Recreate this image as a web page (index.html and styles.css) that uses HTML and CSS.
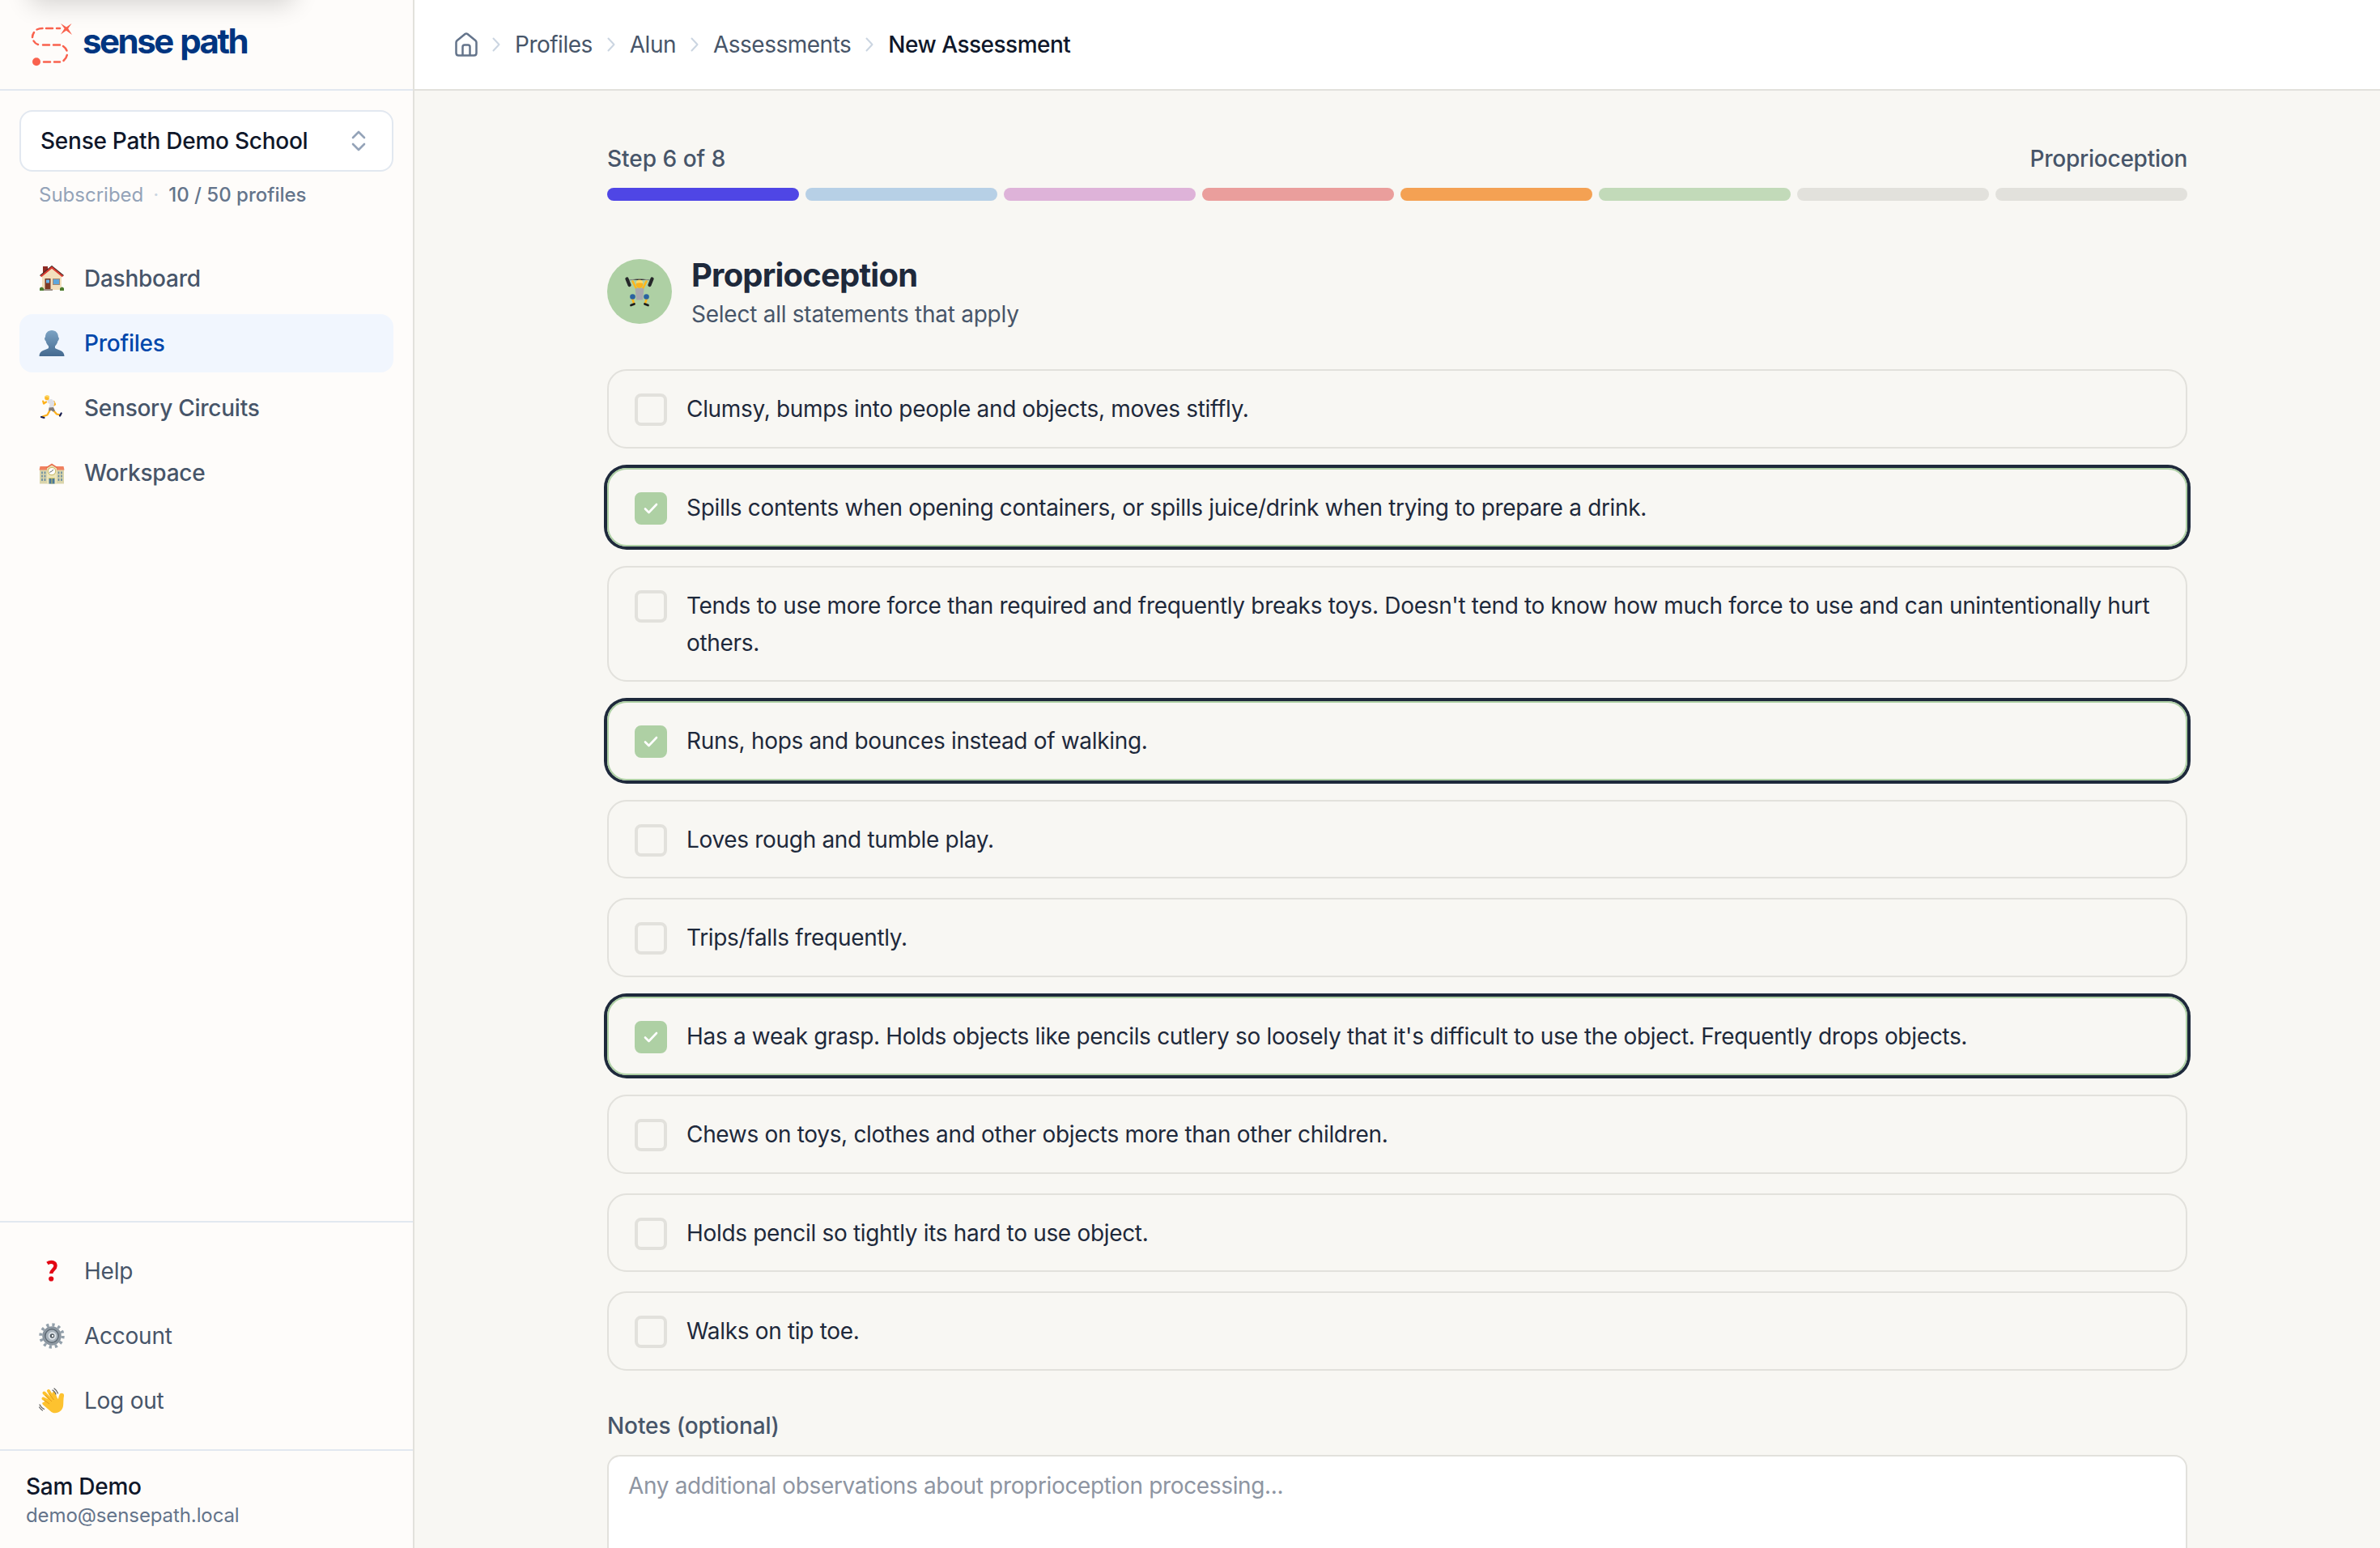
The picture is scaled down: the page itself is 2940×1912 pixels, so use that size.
FILE: index.html
```html
<!DOCTYPE html>
<html lang="en">
<head>
    <meta charset="UTF-8">
    <meta name="viewport" content="width=device-width, initial-scale=1.0">
    <title>New Assessment - Sense Path</title>
    <link rel="stylesheet" href="styles.css">
</head>
<body>
    <aside class="sidebar">
        <div class="skip-link"></div>
        <div class="brand">
            <svg class="brand-mark" viewBox="36 26 56 58">
                <g fill="none" stroke="#f9624e" stroke-width="2.5" stroke-linecap="round">
                    <path d="M74 35h-4M65 35h-8M52.500 35q-4 0-7 1.500M42 40q-2 3-2 6M41.500 50.500q2 3.500 5.500 4.500M53 55.500h8M66 55.500h8M78 57q3 2 4.500 5.500M82.800 68q-.8 4-4.300 7M74 76.500h-7M62 76.500h-8"/>
                </g>
                <path fill="#f9624e" d="M75 29l7 4.600L88.500 29l-4.300 6.300L89 43l-7.200-5.200L75 42.500l4.600-7.200z"/>
                <circle cx="45" cy="76.200" r="5" fill="#f9624e"/>
            </svg>
            <span class="brand-name">sense path</span>
        </div>
        <div class="workspace">
            <div class="workspace-select">
                <span>Sense Path Demo School</span>
                <svg class="updown" viewBox="0 0 18 26" fill="none" stroke="#94a3b8" stroke-width="2.600" stroke-linecap="round" stroke-linejoin="round">
                    <path d="M2 9l7-7 7 7M2 17l7 7 7-7"/>
                </svg>
            </div>
            <p class="plan"><span>Subscribed</span><span class="dot">·</span><b>10 / 50 profiles</b></p>
        </div>
        <nav class="nav main-nav">
            <a class="nav-item">
                <svg class="emoji" viewBox="0 0 32 32">
                    <path fill="#8e2a24" d="M5 1h6v9H5z"/>
                    <path fill="#f3dfbd" d="M4 13L16 3l12 10v17H4z"/>
                    <path fill="none" stroke="#3a2522" stroke-width="1.500" d="M1.500 12.500L16 .900l14.500 11.600"/>
                    <path fill="none" stroke="#d93a30" stroke-width="2.200" d="M2.500 13.500L16 2.500l13.500 11"/>
                    <path fill="#7c3a26" d="M7.500 16h7v14h-7z"/>
                    <path fill="#69b5ea" d="M9 17.500h4v4H9z"/>
                    <path fill="#a9866a" d="M17 16h9v8h-9z"/>
                    <path fill="#5ea6dc" d="M18 17h7v6h-7z"/>
                    <path fill="#9c8f86" d="M6 29h11v2H6z"/>
                    <path fill="#4d7c2e" d="M1 28q2-3 5 0v3H1zM26 28q3-3 5 0v3h-5z"/>
                </svg>
                <span>Dashboard</span>
            </a>
            <a class="nav-item active">
                <svg class="emoji" viewBox="0 0 32 32">
                    <defs>
                        <linearGradient id="bust" x1="0" y1="0" x2="0" y2="1">
                            <stop offset="0" stop-color="#7ca3c4"/>
                            <stop offset="1" stop-color="#456a90"/>
                        </linearGradient>
                    </defs>
                    <path fill="url(#bust)" d="M16 0c5 0 8 3.500 8 8.500 1.500 0 1 4-.5 4.500-.5 3-2 5-3.500 6.500v2.500c3 2.500 11.500 2 11.500 10H.5c0-8 8.500-7.500 11.500-10v-2.500C10.500 18 9 16 8.500 13 7 12.500 6.500 8.500 8 8.500 8 3.500 11 0 16 0z"/>
                </svg>
                <span>Profiles</span>
            </a>
            <a class="nav-item">
                <svg class="emoji" viewBox="0 0 32 32">
                    <path fill="none" stroke="#fdb01a" stroke-width="2.200" stroke-linecap="round" stroke-linejoin="round" d="M14 18l-3.500 6.500-6 2M18 19l4 4.500 4.500 1M9 8.500l-3 2-.800-3M18.500 8l1.500 3.500-2.500 1.500"/>
                    <path fill="#dedfe6" d="M11 5.500l5-.5 3.500 3.500L18 16h-5.500l1-5-3-1.500z"/>
                    <path fill="#7f7a78" d="M12.500 15.500l5.500-.5 2 4.500-2.500 1-2-1.500-3.500.5z"/>
                    <circle cx="10" cy="3.400" r="2.800" fill="#fbb829"/>
                    <path fill="#fdd663" d="M7 2q2-3 6-1v3q-2-2-6-2z"/>
                    <path stroke="#161d51" stroke-width="2.200" stroke-linecap="round" d="M3 27l3.500 1M26 25.500l1.700-3"/>
                </svg>
                <span>Sensory Circuits</span>
            </a>
            <a class="nav-item">
                <svg class="emoji" viewBox="0 0 32 32">
                    <path fill="#dad5ab" d="M1 12h30v17.500H1z"/>
                    <path fill="#f0805f" d="M1.500 8h29l1 4.500H.500z"/>
                    <path fill="#ece5bb" d="M10 9.500L16 6l6 3.500v20H10z"/>
                    <path fill="none" stroke="#e9704e" stroke-width="1.500" d="M9 10l7-4.500 7 4.500"/>
                    <circle cx="16" cy="14" r="4.700" fill="#fff" stroke="#cdbf70" stroke-width="1.200"/>
                    <path fill="none" stroke="#444" stroke-width=".8" d="M13 15.500l3-1.500 2-2"/>
                    <path stroke="#6288a0" stroke-width="1.600" stroke-dasharray="2.800 1.500" d="M4 14.500v13M7.500 14.500v13M24.500 14.500v13M28 14.500v13"/>
                    <path fill="#4b7898" d="M12.500 23h7v6.500h-7z"/>
                    <path stroke="#d8c95f" stroke-width=".9" d="M12 22.500h8M16 23v6.500"/>
                </svg>
                <span>Workspace</span>
            </a>
        </nav>
        <nav class="nav help-nav">
            <a class="nav-item">
                <svg class="emoji" viewBox="0 0 32 32">
                    <path fill="none" stroke="#e30613" stroke-width="4.400" d="M10.500 6.500C15 3.500 20.500 5 20.500 9.500c0 4.500-5.300 5-5.300 9.500"/>
                    <circle cx="15.200" cy="25.500" r="3.100" fill="#e30613"/>
                </svg>
                <span>Help</span>
            </a>
            <a class="nav-item">
                <svg class="emoji" viewBox="0 0 32 32">
                    <circle cx="16" cy="16" r="13.700" fill="none" stroke="#93a0ab" stroke-width="4" stroke-dasharray="3.200 3.970"/>
                    <circle cx="16" cy="16" r="10.500" fill="#a9b3bc" stroke="#8a959f" stroke-width="2.500"/>
                    <circle cx="16" cy="16" r="8.200" fill="none" stroke="#5d6872" stroke-width="1.600"/>
                    <circle cx="16.500" cy="16" r="3.800" fill="#505a62" stroke="#dfe5ea" stroke-width="2"/>
                    <circle cx="17" cy="16" r="1.200" fill="#fff"/>
                </svg>
                <span>Account</span>
            </a>
            <a class="nav-item">
                <svg class="emoji" viewBox="0 0 32 32">
                    <g fill="none" stroke="#fdc22f" stroke-width="4" stroke-linecap="round">
                        <path d="M18 20L5.500 13.500M18 18L6.500 6.500M20 17L12 4M22 17L18.500 7"/>
                    </g>
                    <path fill="#fdc22f" d="M10 14l9-5 5 5c1-4 1.500-8 5-7 3 .5 2 3 1.500 7-.5 6 .5 10-3 14-4 4-9 4-12 2L5 21q-2-3 1-3z"/>
                    <path fill="none" stroke="#e39a1c" stroke-width="1" d="M8 9l8 8M12.500 7l6 8M6 15l7 5"/>
                    <path fill="none" stroke="#5b5b5b" stroke-width="1.200" stroke-linecap="round" d="M19 1q3 2 4.500 6M17 3q3 2 4 5M1 21q2 4 5.500 5.500M.500 24q2 3 4 4"/>
                </svg>
                <span>Log out</span>
            </a>
        </nav>
        <div class="user">
            <div class="user-name">Sam Demo</div>
            <div class="user-email">demo@sensepath.local</div>
        </div>
    </aside>

    <div class="page">
        <header class="topbar">
            <svg class="home" viewBox="0 0 28 30" fill="none" stroke="#64748b" stroke-width="2.500" stroke-linejoin="round">
                <path d="M1.500 12.500Q1.500 11 2.700 10L12.500 2Q14 1 15.500 2l9.800 8q1.200 1 1.200 2.500V25.500q0 3-3 3h-19q-3 0-3-3zM9.500 28V18q0-2.500 2.500-2.500h4q2.500 0 2.500 2.500v10"/>
            </svg>
            <svg class="sep" viewBox="0 0 10 18"><path d="M1.500 1.500L8.500 9l-7 7.500"/></svg>
            <a class="crumb">Profiles</a>
            <svg class="sep" viewBox="0 0 10 18"><path d="M1.500 1.500L8.500 9l-7 7.500"/></svg>
            <a class="crumb">Alun</a>
            <svg class="sep" viewBox="0 0 10 18"><path d="M1.500 1.500L8.500 9l-7 7.500"/></svg>
            <a class="crumb">Assessments</a>
            <svg class="sep" viewBox="0 0 10 18"><path d="M1.500 1.500L8.500 9l-7 7.500"/></svg>
            <span class="crumb current">New Assessment</span>
        </header>

        <main class="content">
            <div class="step-row">
                <span class="step-count">Step 6 of 8</span>
                <span>Proprioception</span>
            </div>
            <div class="progress">
                <i class="bar indigo"></i>
                <i class="bar blue"></i>
                <i class="bar pink"></i>
                <i class="bar red"></i>
                <i class="bar orange"></i>
                <i class="bar green"></i>
                <i class="bar"></i>
                <i class="bar"></i>
            </div>

            <div class="section-head">
                <div class="section-icon">
                    <svg viewBox="0 0 36 38">
                        <path stroke="#8a8f86" stroke-width="1" d="M5 5q13-3 26 0"/>
                        <path stroke="#26282a" stroke-width="4.200" stroke-linecap="round" d="M2.500 3.500l3 7.500M33.500 3.500l-3 7.500"/>
                        <path fill="none" stroke="#fdb71c" stroke-width="2.600" stroke-linecap="round" d="M9.500 6.500l4.500 9M26.500 6.500l-4.500 9"/>
                        <path fill="#a9a9ae" d="M12.500 15.500q5.500-2 11 0l-1.500 14h-8z"/>
                        <circle cx="18" cy="10.500" r="4.200" fill="#fbb31e"/>
                        <path fill="#fdda6a" d="M13.800 9q0-4.500 4.200-4.500T22.200 9q-4-1.500-8.400 0z"/>
                        <path stroke="#fdb71c" stroke-width="2.600" d="M9 27l2 7M27 27l-2 7"/>
                        <circle cx="9.500" cy="25.500" r="3.300" fill="#2a62a0"/>
                        <circle cx="26.500" cy="25.500" r="3.300" fill="#2a62a0"/>
                        <path stroke="#1c1c1c" stroke-width="2.800" stroke-linecap="round" d="M7.500 36l4-1.500M28.500 36l-4-1.500"/>
                    </svg>
                </div>
                <div>
                    <h1>Proprioception</h1>
                    <p>Select all statements that apply</p>
                </div>
            </div>

            <div class="statements">
                <label class="statement"><span class="box"></span><span>Clumsy, bumps into people and objects, moves stiffly.</span></label>
                <label class="statement checked"><span class="box"><svg viewBox="0 0 18 14"><path d="M2 7.500L6.500 12 16 2"/></svg></span><span>Spills contents when opening containers, or spills juice/drink when trying to prepare a drink.</span></label>
                <label class="statement"><span class="box"></span><span>Tends to use more force than required and frequently breaks toys. Doesn't tend to know how much force to use and can unintentionally hurt others.</span></label>
                <label class="statement checked"><span class="box"><svg viewBox="0 0 18 14"><path d="M2 7.500L6.500 12 16 2"/></svg></span><span>Runs, hops and bounces instead of walking.</span></label>
                <label class="statement"><span class="box"></span><span>Loves rough and tumble play.</span></label>
                <label class="statement"><span class="box"></span><span>Trips/falls frequently.</span></label>
                <label class="statement checked"><span class="box"><svg viewBox="0 0 18 14"><path d="M2 7.500L6.500 12 16 2"/></svg></span><span>Has a weak grasp. Holds objects like pencils cutlery so loosely that it's difficult to use the object. Frequently drops objects.</span></label>
                <label class="statement"><span class="box"></span><span>Chews on toys, clothes and other objects more than other children.</span></label>
                <label class="statement"><span class="box"></span><span>Holds pencil so tightly its hard to use object.</span></label>
                <label class="statement"><span class="box"></span><span>Walks on tip toe.</span></label>
            </div>

            <label class="notes-label" for="notes">Notes (optional)</label>
            <textarea id="notes" class="notes" placeholder="Any additional observations about proprioception processing..."></textarea>
        </main>
    </div>
</body>
</html>
```
FILE: styles.css
```css
* {
    box-sizing: border-box;
}
body, html {
    margin: 0;
    padding: 0;
    height: 100%;
    overflow: hidden;
}
body {
    display: flex;
    font-family: Inter, "Liberation Sans", sans-serif;
    font-size: 28px;
    line-height: 40px;
    letter-spacing: -0.25px;
    color: #1e293b;
    background-color: #f8f7f3;
}
p, h1 {
    margin: 0;
}
svg {
    display: block;
    flex-shrink: 0;
}

/* Sidebar */
.sidebar {
    position: relative;
    width: 512px;
    flex-shrink: 0;
    display: flex;
    flex-direction: column;
    background-color: #fefcfa;
    border-right: 2px solid #e2e1dc;
}
.skip-link {
    position: absolute;
    top: -60px;
    left: 36px;
    width: 328px;
    height: 56px;
    border-radius: 12px;
    box-shadow: 0 10px 30px rgba(0, 0, 0, 0.16);
}
.brand {
    height: 112px;
    display: flex;
    align-items: flex-start;
    padding: 26px 36px 0;
    gap: 10px;
    border-bottom: 2px solid #e2e8f0;
}
.brand-mark {
    width: 56px;
    height: 58px;
}
.brand-name {
    font-size: 42px;
    line-height: 50px;
    font-weight: 700;
    letter-spacing: -2.5px;
    word-spacing: 2px;
    color: #003580;
}
.workspace {
    padding: 24px 24px 0;
}
.workspace-select {
    height: 76px;
    display: flex;
    align-items: center;
    justify-content: space-between;
    padding: 0 32px 0 24px;
    border: 2px solid #e2e8f0;
    border-radius: 16px;
    background-color: #fff;
    font-weight: 500;
    color: #0f172a;
}
.updown {
    width: 18px;
    height: 26px;
}
.plan {
    display: flex;
    gap: 12px;
    padding: 13px 24px 0;
    font-size: 24px;
    line-height: 32px;
    letter-spacing: 0;
    color: #94a3b8;
}
.plan .dot {
    color: #cbd5e1;
}
.plan b {
    font-weight: 500;
    color: #64748b;
}
.nav {
    display: flex;
    flex-direction: column;
    gap: 8px;
    padding: 24px;
}
.main-nav {
    flex: 1;
    padding-top: 51px;
    font-weight: 500;
}
.help-nav {
    border-top: 2px solid #e2e8f0;
}
.nav-item {
    height: 72px;
    display: flex;
    align-items: center;
    gap: 24px;
    padding: 0 24px;
    border-radius: 16px;
    color: #475569;
}
.nav-item.active {
    background-color: #f1f6fe;
    color: #0047ab;
}
.emoji {
    width: 32px;
    height: 32px;
}
.user {
    height: 122px;
    padding: 24px 32px;
    border-top: 2px solid #e2e8f0;
}
.user-name {
    font-weight: 500;
    color: #0f172a;
}
.user-email {
    font-size: 24px;
    line-height: 32px;
    letter-spacing: -0.1px;
    color: #64748b;
}

/* Top bar */
.page {
    flex: 1;
    min-width: 0;
    height: 100%;
    overflow: hidden;
}
.topbar {
    height: 112px;
    display: flex;
    align-items: center;
    gap: 18px;
    padding: 0 50px;
    background-color: #fff;
    border-bottom: 2px solid #e2e1dc;
}
.home {
    width: 28px;
    height: 30px;
}
.sep {
    width: 10px;
    height: 18px;
    fill: none;
    stroke: #cbd5e1;
    stroke-width: 2;
    stroke-linecap: round;
    stroke-linejoin: round;
}
.crumb {
    letter-spacing: -0.5px;
    color: #475569;
}
.crumb.current {
    font-weight: 500;
    color: #0f172a;
}

/* Assessment form */
.content {
    width: 1952px;
    margin-left: 238px;
    padding-top: 64px;
}
.step-row {
    display: flex;
    justify-content: space-between;
    margin-bottom: 16px;
    font-weight: 500;
    color: #475569;
}
.step-count {
    letter-spacing: 0;
}
.progress {
    display: flex;
    gap: 8px;
}
.bar {
    flex: 1;
    height: 16px;
    border-radius: 8px;
    background-color: #e2e1dc;
}
.indigo { background-color: #4f46e5; }
.blue { background-color: #b7d0e6; }
.pink { background-color: #deb3d9; }
.red { background-color: #ea9e9c; }
.orange { background-color: #f4a153; }
.green { background-color: #c2dab9; }

.section-head {
    display: flex;
    align-items: center;
    gap: 24px;
    height: 96px;
    margin: 64px 0 48px;
}
.section-icon {
    width: 80px;
    height: 80px;
    display: flex;
    align-items: center;
    justify-content: center;
    border-radius: 50%;
    background-color: #aed0a4;
}
.section-icon svg {
    width: 36px;
    height: 38px;
}
h1 {
    font-size: 40px;
    line-height: 56px;
    font-weight: 700;
    letter-spacing: -0.8px;
}
.section-head p {
    line-height: 40px;
    color: #475569;
}
.statements {
    display: flex;
    flex-direction: column;
    gap: 24px;
}
.statement {
    display: flex;
    align-items: flex-start;
    gap: 24px;
    padding: 25px 32px 23px;
    border: 2px solid #e2e1dc;
    border-radius: 24px;
    line-height: 45.5px;
    letter-spacing: -0.32px;
}
.statement.checked {
    border-color: #aed0a4;
    box-shadow: 0 0 0 4px #1e293b;
}
.box {
    width: 40px;
    height: 40px;
    flex-shrink: 0;
    margin-top: 3px;
    display: flex;
    align-items: center;
    justify-content: center;
    border: 4px solid #e2e1dc;
    border-radius: 8px;
}
.checked .box {
    border-color: #aed0a4;
    background-color: #aed0a4;
}
.box svg {
    width: 18px;
    height: 14px;
    fill: none;
    stroke: #fff;
    stroke-width: 2.6;
    stroke-linecap: round;
    stroke-linejoin: round;
}
.notes-label {
    display: block;
    margin: 48px 0 16px;
    font-weight: 500;
    letter-spacing: -0.1px;
    color: #475569;
}
.notes {
    display: block;
    width: 100%;
    height: 220px;
    padding: 16px 24px;
    border: 2px solid #e2e1dc;
    border-radius: 16px;
    background-color: #fff;
    font: inherit;
    letter-spacing: -0.35px;
    resize: none;
}
.notes::placeholder {
    color: #8e95a2;
}
```
